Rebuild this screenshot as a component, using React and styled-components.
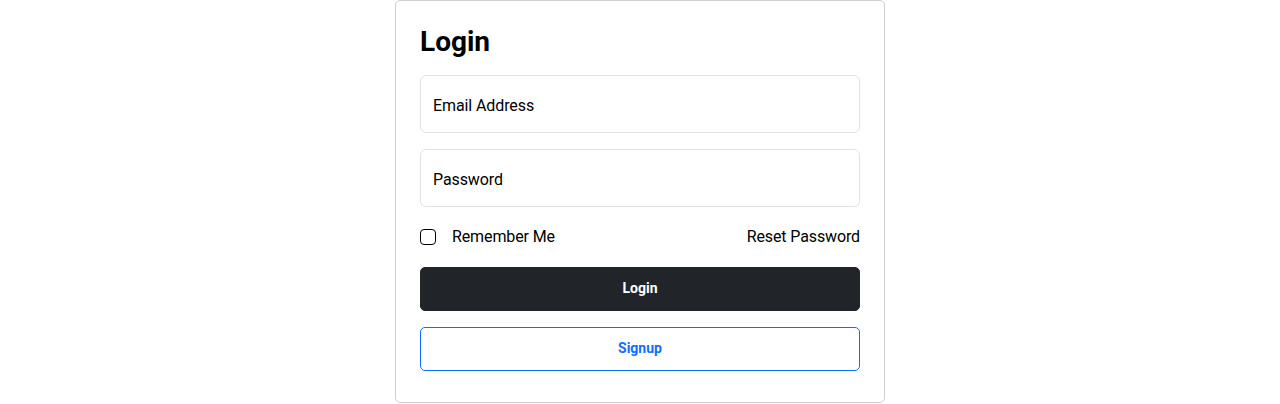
import React from "react";
import styled, { createGlobalStyle } from "styled-components";

const Global = createGlobalStyle`
  * { box-sizing: border-box; }
  body {
    margin: 0;
    background: #fff;
    font-family: Roboto, "Liberation Sans", sans-serif;
    color: #000;
  }
`;

const Page = styled.div`
  display: flex;
  justify-content: center;
`;

const Card = styled.div`
  width: 490px;
  border: 1px solid #cfcfcf;
  border-radius: 5px;
  padding: 24px 24px 31px;
  display: flex;
  flex-direction: column;
`;

const Title = styled.h2`
  margin: 0 0 16px;
  font-size: 28px;
  line-height: 1.2;
  font-weight: 700;
`;

const Form = styled.form`
  display: flex;
  flex-direction: column;
  gap: 16px;
`;

const Field = styled.div`
  height: 58px;
  border: 1px solid #dee2e6;
  border-radius: 6px;
  display: flex;
  align-items: center;
  padding: 3px 12px 0;
  font-size: 16px;
  letter-spacing: -0.1px;
  color: #000;
`;

const Row = styled.div`
  display: flex;
  align-items: center;
  justify-content: space-between;
  height: 24px;
  margin: 2px 0;
  font-size: 16px;
  letter-spacing: -0.12px;
`;

const CheckLabel = styled.label`
  display: flex;
  align-items: center;
  gap: 16px;
`;

const Box = styled.span`
  width: 16px;
  height: 16px;
  border: 1.5px solid #000;
  border-radius: 4px;
  display: inline-block;
`;

const Link = styled.span`
  color: #000;
`;

const Button = styled.button`
  height: 44px;
  padding: 0 0 2px;
  border-radius: 5px;
  font-family: Roboto, "Liberation Sans", sans-serif;
  font-size: 14px;
  font-weight: 700;
  border: 1px solid ${(p) => (p.$outline ? "#0d6efd" : "#212529")};
  background: ${(p) => (p.$outline ? "#fff" : "#212529")};
  color: ${(p) => (p.$outline ? "#0d6efd" : "#fff")};
`;

export default function App() {
  return (
    <>
      <Global />
      <Page>
        <Card>
          <Title>Login</Title>
          <Form onSubmit={(e) => e.preventDefault()}>
            <Field>Email Address</Field>
            <Field>Password</Field>
            <Row>
              <CheckLabel>
                <Box />
                Remember Me
              </CheckLabel>
              <Link>Reset Password</Link>
            </Row>
            <Button type="button">Login</Button>
            <Button type="button" $outline>
              Signup
            </Button>
          </Form>
        </Card>
      </Page>
    </>
  );
}
